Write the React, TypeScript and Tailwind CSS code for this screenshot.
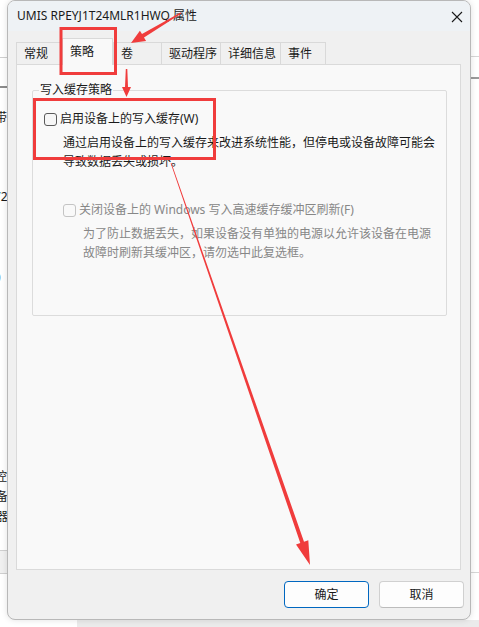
import type { ReactNode } from "react";

type Tab = { label: string; width: string; active?: boolean; last?: boolean };

const TABS: Tab[] = [
  { label: "常规", width: "w-[46px]" },
  { label: "策略", width: "w-[51px]", active: true },
  { label: "卷", width: "w-[48px]" },
  { label: "驱动程序", width: "w-[59px]" },
  { label: "详细信息", width: "w-[60px]" },
  { label: "事件", width: "w-[46px]", last: true },
];

// tapered arrow with head at (x2, y2)
function arrowPoints(
  x1: number,
  y1: number,
  x2: number,
  y2: number,
  w0: number,
  w1: number,
  headLen: number,
  headW: number,
) {
  const len = Math.hypot(x2 - x1, y2 - y1);
  const dx = (x2 - x1) / len;
  const dy = (y2 - y1) / len;
  const nx = -dy;
  const ny = dx;
  const hx = x2 - dx * headLen;
  const hy = y2 - dy * headLen;
  const pts = [
    [x1 + (nx * w0) / 2, y1 + (ny * w0) / 2],
    [hx + (nx * w1) / 2, hy + (ny * w1) / 2],
    [hx + (nx * headW) / 2, hy + (ny * headW) / 2],
    [x2, y2],
    [hx - (nx * headW) / 2, hy - (ny * headW) / 2],
    [hx - (nx * w1) / 2, hy - (ny * w1) / 2],
    [x1 - (nx * w0) / 2, y1 - (ny * w0) / 2],
  ];
  return pts.map((p) => p.map((v) => v.toFixed(1)).join(",")).join(" ");
}

function CheckBox({ disabled }: { disabled?: boolean }) {
  return (
    <span
      className={
        "block w-[13px] h-[13px] rounded-[3px] border shrink-0 " +
        (disabled ? "border-[#c4c4c4] bg-[#f9f9f9]" : "border-[#5a5a5a] bg-[#f6f6f6]")
      }
    />
  );
}

function Btn({ children, primary }: { children: ReactNode; primary?: boolean }) {
  return (
    <button
      type="button"
      className={
        "w-[85px] h-[27px] rounded-[4px] bg-[#fdfdfd] text-[12px] text-[#1a1a1a] border " +
        (primary ? "border-[#0067c0]" : "border-[#d0d0d0] border-b-[#bcbcbc]")
      }
    >
      {children}
    </button>
  );
}

export default function App() {
  return (
    <div className="relative w-[479px] h-[627px] overflow-hidden bg-white font-['Noto_Sans','Noto_Sans_CJK_SC',sans-serif] text-[#1a1a1a]">
      {/* window behind the dialog */}
      <div className="absolute left-0 top-[57px] w-[8px] h-[31px] border-t border-[#cfcfcf] border-b-2 border-b-[#8c8c8c]" />
      <div className="absolute right-0 top-[56px] w-[10px] h-[23px] border-t border-[#d6d6d6] border-b-2 border-b-[#9a9a9a]" />
      <div className="absolute left-0 top-[550px] w-[8px] h-[24px] bg-[#f0f0f0] border-y border-[#cfcfcf]" />
      <div className="absolute right-0 top-[572px] w-[10px] h-px bg-[#d6d6d6]" />
      <div className="absolute left-[77px] right-0 top-[620px] bottom-0 bg-[#ebebeb]" />
      <span className="absolute left-[-5px] top-[109px] text-[12px]">带</span>
      <span className="absolute left-[-6px] top-[188px] text-[12px]">72</span>
      <span className="absolute left-[-3px] top-[268px] text-[12px]">)</span>
      <span className="absolute left-[-5px] top-[468px] text-[12px]">控</span>
      <span className="absolute left-[-4px] top-[488px] text-[12px]">备</span>
      <span className="absolute left-[-4px] top-[508px] text-[12px]">器</span>

      {/* dialog */}
      <div className="relative z-10 ml-[7px] w-[464px] h-[620px] rounded-lg border border-[#b8b8b8] bg-[#f0f0f0] overflow-hidden shadow-[0_0_6px_rgba(0,0,0,0.12)]">
        <div className="h-[30px] bg-[#eef2f5] flex items-center justify-between pl-[9px] pr-[7px]">
          <span className="text-[12px] leading-[16px]">UMIS RPEYJ1T24MLR1HWQ 属性</span>
          <svg width="12" height="12" viewBox="0 0 12 12" className="mt-[1px]">
            <path d="M1 1 L11 11 M11 1 L1 11" stroke="#1a1a1a" strokeWidth="1.1" />
          </svg>
        </div>

        <div className="pl-[8px]">
          <div className="mt-[11px] h-[22px] flex items-end">
            {TABS.map((t) =>
              t.active ? (
                <div
                  key={t.label}
                  className={t.width + " relative z-10 -mb-px h-[27px] shrink-0 bg-[#f9f9f9] border border-b-0 border-[#d9d9d9] pl-[7px] pt-[3px] text-[12px] leading-[20px]"}
                >
                  {t.label}
                </div>
              ) : (
                <div
                  key={t.label}
                  className={
                    t.width +
                    " h-[22px] shrink-0 border-t border-l border-[#d9d9d9] pl-[7px] text-[12px] leading-[21px]" +
                    (t.last ? " border-r" : "")
                  }
                >
                  {t.label}
                </div>
              ),
            )}
          </div>

          <div className="w-[445px] h-[506px] border border-[#dadada] bg-[#f9f9f9] pt-[25px] pl-[15px]">
            <div className="relative w-[415px] h-[226px] border border-[#dcdcdc] rounded-[2px]">
              <span className="absolute -top-[10px] left-[6px] px-[1px] bg-[#f9f9f9] text-[12px] leading-[18px]">
                写入缓存策略
              </span>

              <div className="pt-[18px] pl-[11px] flex items-center gap-[3px] h-[38px]">
                <CheckBox />
                <span className="text-[12px] leading-[20px]">启用设备上的写入缓存(W)</span>
              </div>
              <p className="mt-[4px] pl-[30px] text-[12px] leading-[19px] whitespace-nowrap">
                通过启用设备上的写入缓存来改进系统性能，但停电或设备故障可能会
                <br />
                导致数据丢失或损坏。
              </p>

              <div className="mt-[29px] pl-[30px] flex items-center gap-[3px] h-[20px]">
                <CheckBox disabled />
                <span className="text-[12px] leading-[20px] text-[#878787]">
                  关闭设备上的 Windows 写入高速缓存缓冲区刷新(F)
                </span>
              </div>
              <p className="mt-[4px] pl-[50px] text-[12px] leading-[19px] text-[#878787] whitespace-nowrap">
                为了防止数据丢失，如果设备没有单独的电源以允许该设备在电源
                <br />
                故障时刷新其缓冲区，请勿选中此复选框。
              </p>
            </div>
          </div>

          <div className="mt-[11px] flex justify-end gap-[10px] pr-[6px]">
            <Btn primary>确定</Btn>
            <Btn>取消</Btn>
          </div>
        </div>
      </div>

      {/* red annotations */}
      <svg
        className="absolute inset-0 z-20 pointer-events-none"
        width="479"
        height="627"
        viewBox="0 0 479 627"
      >
        <rect x="61" y="28.5" width="54.5" height="45" fill="none" stroke="#f03c3c" strokeWidth="3" />
        <rect x="34.5" y="99.5" width="180" height="59" fill="none" stroke="#f03c3c" strokeWidth="3" />
        <polygon points={arrowPoints(181, 13, 131, 43, 1.5, 4, 14, 12)} fill="#f03c3c" />
        <polygon points={arrowPoints(126.5, 69, 126.5, 97, 1.5, 3, 10, 9)} fill="#f03c3c" />
        <polygon points={arrowPoints(171, 163, 310, 565, 0.8, 4, 24, 13)} fill="#f03c3c" />
      </svg>
    </div>
  );
}
